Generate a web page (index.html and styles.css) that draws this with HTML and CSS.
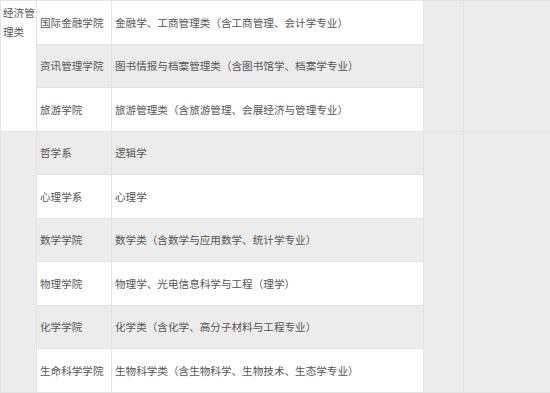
FILE: index.html
```html
<!DOCTYPE html>
<html lang="zh">
<head>
<meta charset="utf-8">
<link rel="stylesheet" href="styles.css">
</head>
<body>
<table class="majors">
  <colgroup>
    <col class="c-cat">
    <col class="c-school">
    <col class="c-major">
    <col class="c-x">
    <col class="c-y">
  </colgroup>
  <tbody>
    <tr>
      <td class="cat" rowspan="3">经济管<br>理类</td>
      <td>国际金融学院</td>
      <td>金融学、工商管理类（含工商管理、会计学专业）</td>
      <td class="shade" rowspan="3"></td>
      <td class="shade" rowspan="3"></td>
    </tr>
    <tr class="alt">
      <td>资讯管理学院</td>
      <td>图书情报与档案管理类（含图书馆学、档案学专业）</td>
    </tr>
    <tr>
      <td>旅游学院</td>
      <td>旅游管理类（含旅游管理、会展经济与管理专业）</td>
    </tr>
    <tr class="alt">
      <td class="cat shade" rowspan="6"></td>
      <td>哲学系</td>
      <td>逻辑学</td>
      <td class="shade" rowspan="6"></td>
      <td class="shade" rowspan="6"></td>
    </tr>
    <tr>
      <td>心理学系</td>
      <td>心理学</td>
    </tr>
    <tr class="alt">
      <td>数学学院</td>
      <td>数学类（含数学与应用数学、统计学专业）</td>
    </tr>
    <tr>
      <td>物理学院</td>
      <td>物理学、光电信息科学与工程（理学）</td>
    </tr>
    <tr class="alt">
      <td>化学学院</td>
      <td>化学类（含化学、高分子材料与工程专业）</td>
    </tr>
    <tr>
      <td>生命科学学院</td>
      <td>生物科学类（含生物科学、生物技术、生态学专业）</td>
    </tr>
  </tbody>
</table>
</body>
</html>
```
FILE: styles.css
```css
html, body {
  margin: 0;
  padding: 0;
  background: #ffffff;
}

.majors {
  border-collapse: collapse;
  table-layout: fixed;
  width: 550px;
  font-family: "Noto Sans CJK SC", "Noto Sans", sans-serif;
  font-size: 10.6px;
  color: #555555;
}

.c-cat { width: 36px; }
.c-school { width: 75px; }
.c-major { width: 312px; }
.c-x { width: 40px; }
.c-y { width: 87px; }

.majors td {
  border: 1px solid #e3e3e3;
  padding: 0 3px;
  height: 42.5px;
  vertical-align: middle;
  white-space: nowrap;
  background: #ffffff;
}

.majors tr.alt td {
  background: #ececec;
}

.majors td.cat {
  vertical-align: top;
  line-height: 18.5px;
  padding: 3px 0 0 2px;
}

.majors td.shade,
.majors tr.alt td.shade {
  background: #ececec;
}
```
